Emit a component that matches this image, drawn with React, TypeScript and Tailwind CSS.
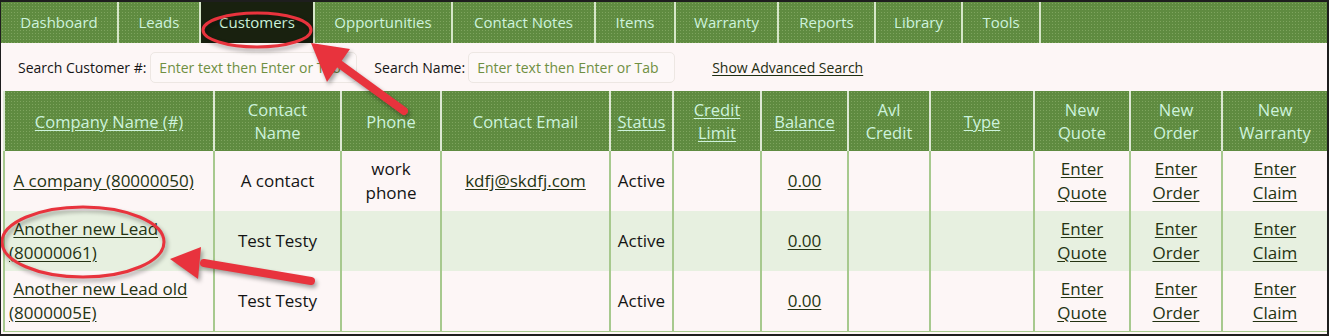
import React from 'react'

const tabs = [
  { label: 'Dashboard', w: 'w-[118px]' },
  { label: 'Leads', w: 'w-[82px]' },
  { label: 'Customers', w: 'w-[114px]', active: true },
  { label: 'Opportunities', w: 'w-[138px]' },
  { label: 'Contact Notes', w: 'w-[143px]' },
  { label: 'Items', w: 'w-[80px]' },
  { label: 'Warranty', w: 'w-[103px]' },
  { label: 'Reports', w: 'w-[97px]' },
  { label: 'Library', w: 'w-[87px]' },
  { label: 'Tools', w: 'w-[78px]' },
]

const green = 'bg-[#5f8b40] bg-[radial-gradient(#7ea45e_0.7px,transparent_0.9px)] bg-[length:3px_3px]'

type Row = {
  company: string
  contact: string
  phone?: boolean
  email?: string
  alt?: boolean
}

const rows: Row[] = [
  { company: 'A company (80000050)', contact: 'A contact', phone: true, email: 'kdfj@skdfj.com' },
  { company: 'Another new Lead (80000061)', contact: 'Test Testy', alt: true },
  { company: 'Another new Lead old (8000005E)', contact: 'Test Testy' },
]

function Th({ children, link }: { children: React.ReactNode; link?: boolean }) {
  return (
    <th className="border-x-2 border-[#dde8d4] px-1 text-center align-middle font-normal leading-[23px]">
      {link ? <span className="underline underline-offset-2">{children}</span> : children}
    </th>
  )
}

function Td({ children, left }: { children?: React.ReactNode; left?: boolean }) {
  return (
    <td className={`border-x-2 border-[#a7c98e] align-middle leading-[24px] ${left ? 'pl-[4px] pr-1 text-left' : 'px-1 text-center'}`}>
      {children}
    </td>
  )
}

function Lnk({ children }: { children: React.ReactNode }) {
  return <a href="#" className="text-[#243312] underline underline-offset-2">{children}</a>
}

export default function App() {
  return (
    <div className="relative h-[336px] w-[1329px] overflow-hidden border-t-2 border-r-2 border-b-2 border-l border-[#1e1e1e] bg-[#fdf6f6] font-['Open_Sans',sans-serif]">
      {/* tabs */}
      <div className={`flex h-[41px] ${green}`}>
        {tabs.map((t) => (
          <div
            key={t.label}
            className={`flex ${t.w} items-center justify-center border-r-2 border-[#d6e6c8] text-[15px] text-[#cdf3dd] ${t.active ? 'bg-[#19210f] bg-none' : ''}`}
          >
            {t.label}
          </div>
        ))}
      </div>

      {/* search */}
      <div className="flex h-[48px] items-center pl-[17px] text-[14px] text-[#151515]">
        <span>Search Customer #:</span>
        <input
          className="ml-[4px] h-[31px] w-[207px] rounded-[5px] border border-[#ede7e3] bg-[#fdf8f8] px-[8px] text-[14px] outline-none placeholder:text-[#6f8f42]"
          placeholder="Enter text then Enter or Tab"
        />
        <span className="ml-[17px]">Search Name:</span>
        <input
          className="ml-[3px] h-[31px] w-[207px] rounded-[5px] border border-[#ede7e3] bg-[#fdf8f8] px-[8px] text-[14px] outline-none placeholder:text-[#6f8f42]"
          placeholder="Enter text then Enter or Tab"
        />
        <a href="#" className="ml-[37px] text-[#1f2d12] underline underline-offset-2">Show Advanced Search</a>
      </div>

      {/* table */}
      <table className="ml-[2px] w-[1324px] table-fixed border-collapse border-l border-[#a7c98e]">
        <colgroup>
          <col className="w-[210px]" />
          <col className="w-[127px]" />
          <col className="w-[100px]" />
          <col className="w-[169px]" />
          <col className="w-[63px]" />
          <col className="w-[88px]" />
          <col className="w-[87px]" />
          <col className="w-[82px]" />
          <col className="w-[104px]" />
          <col className="w-[96px]" />
          <col className="w-[92px]" />
          <col className="w-[106px]" />
        </colgroup>
        <thead>
          <tr className={`h-[60px] text-[16.5px] text-[#cdf3dd] ${green}`}>
            <Th link>Company Name (#)</Th>
            <Th>Contact<br />Name</Th>
            <Th>Phone</Th>
            <Th>Contact Email</Th>
            <Th link>Status</Th>
            <Th link>Credit<br />Limit</Th>
            <Th link>Balance</Th>
            <Th>Avl<br />Credit</Th>
            <Th link>Type</Th>
            <Th>New<br />Quote</Th>
            <Th>New<br />Order</Th>
            <Th>New<br />Warranty</Th>
          </tr>
        </thead>
        <tbody className="text-[17px] text-[#141414]">
          {rows.map((r, i) => (
            <tr key={i} className={`h-[60px] ${r.alt ? 'bg-[#e7f0e0]' : 'bg-[#fdf6f6]'} ${i === rows.length - 1 ? 'border-b border-[#a7c98e]' : ''}`}>
              <Td left>
                {'\u00a0'}
                <Lnk>{r.company}</Lnk>
              </Td>
              <Td>{r.contact}</Td>
              <Td>{r.phone ? <>work<br />phone</> : null}</Td>
              <Td>{r.email ? <Lnk>{r.email}</Lnk> : null}</Td>
              <Td>Active</Td>
              <Td />
              <Td><Lnk>0.00</Lnk></Td>
              <Td />
              <Td />
              <Td><Lnk>Enter</Lnk><br /><Lnk>Quote</Lnk></Td>
              <Td><Lnk>Enter</Lnk><br /><Lnk>Order</Lnk></Td>
              <Td><Lnk>Enter</Lnk><br /><Lnk>Claim</Lnk></Td>
            </tr>
          ))}
        </tbody>
      </table>

      {/* callout annotations */}
      <svg
        className="pointer-events-none absolute left-[-1px] top-[-2px] drop-shadow-[2px_3px_2px_rgba(0,0,0,0.35)]"
        width="1329"
        height="336"
        viewBox="0 0 1329 336"
      >
        <g fill="none" stroke="#e8333d" strokeWidth="3">
          <ellipse cx="257" cy="30" rx="54" ry="17" />
          <ellipse cx="83" cy="242" rx="81" ry="35" />
        </g>
        <g stroke="#e8333d" strokeWidth="8" strokeLinecap="round">
          <line x1="404" y1="111" x2="338" y2="63" />
          <line x1="311" y1="281" x2="204" y2="263" />
        </g>
        <g fill="#e8333d">
          <polygon points="311,43 350,49 327,82" />
          <polygon points="170,259 201,247 198,279" />
        </g>
      </svg>
    </div>
  )
}
